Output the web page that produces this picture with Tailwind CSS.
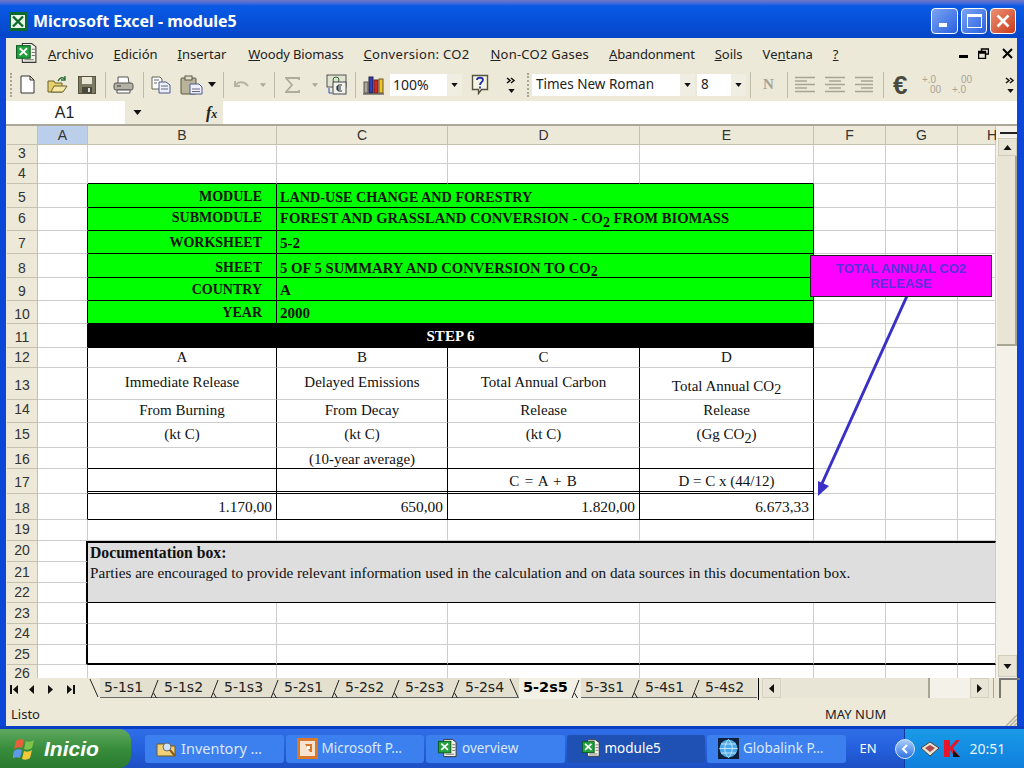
<!DOCTYPE html>
<html lang="en">
<head>
    <meta charset="UTF-8">
    <meta name="viewport" content="width=device-width, initial-scale=1.0">
    <title>Microsoft Excel - module5</title>
    <script src="https://cdn.jsdelivr.net/npm/@tailwindcss/browser@4"></script>
</head>
<body class="w-[1024px] h-[768px] overflow-hidden flex flex-col bg-[#0b46d6] font-['Noto_Sans',sans-serif]">
    <svg class="hidden">
        <symbol id="xls" viewBox="0 0 22 22">
            <path d="M7 1.5h9l4 3v15H7z" fill="#f5f4e8" stroke="#333"/>
            <path d="M16 7h3M16 10h3M16 13h3M9 17h9" stroke="#777"/>
            <rect x="1.5" y="3.5" width="13" height="12" fill="#22a33f" stroke="#0c5a20"/>
            <path d="M4.5 6l7 6.5M11.5 6l-7 6.5" stroke="#fff" stroke-width="1.8"/>
        </symbol>
        <symbol id="tabsep" viewBox="0 0 10 22">
            <path d="M1 20L8 2" stroke="#222" fill="none"/>
            <path d="M3.500 15l3 5" stroke="#222" fill="none"/>
        </symbol>
        <symbol id="drop" viewBox="0 0 8 5">
            <path d="M0 0h8L4 5z" fill="#111"/>
        </symbol>
    </svg>

    <!-- title bar -->
    <div class="h-[38px] shrink-0 flex items-center pt-[4px] pl-[9px] pr-[8px] bg-gradient-to-b from-[#6f78c4] via-[#0a5ae6] via-15% to-[#0445c8]">
        <svg class="w-[18px] h-[19px]" viewBox="0 0 18 19">
            <rect width="18" height="19" fill="#0c6b2c"/>
            <rect x="2" y="3" width="14" height="13" fill="#e8f4e8"/>
            <path d="M4 4.5l10 10M14 4.5l-10 10" stroke="#0c6b2c" stroke-width="2.4"/>
        </svg>
        <span class="ml-[6px] text-[16px] font-bold text-white">Microsoft Excel - module5</span>
        <div class="ml-auto flex gap-[3px]">
            <div class="w-[27px] h-[26px] rounded-[4px] border border-white bg-gradient-to-br from-[#7ba3f2] to-[#2a5fe0] flex items-end pl-[7px] pb-[6px]">
                <div class="w-[8px] h-[4px] bg-white"></div>
            </div>
            <div class="w-[26px] h-[26px] rounded-[4px] border border-white bg-gradient-to-br from-[#7ba3f2] to-[#2a5fe0] flex items-center justify-center">
                <div class="w-[15px] h-[14px] border border-white border-t-[3px]"></div>
            </div>
            <div class="w-[26px] h-[26px] rounded-[4px] border border-white bg-gradient-to-br from-[#ec8f70] to-[#c8391a] flex items-center justify-center">
                <svg class="w-[14px] h-[14px]" viewBox="0 0 14 14"><path d="M1.5 1.5l11 11M12.5 1.5l-11 11" stroke="#fff" stroke-width="2.6"/></svg>
            </div>
        </div>
    </div>

    <!-- window body -->
    <div class="ml-[6px] mr-[7px] h-[688px] shrink-0 flex flex-col bg-[#ece9d8]">

        <!-- menu -->
        <div class="h-[30px] shrink-0 flex items-center text-[13px] text-[#222] relative">
            <svg class="ml-[9px] w-[23px] h-[23px]"><use href="#xls"/></svg>
            <div class="ml-[10px] pt-[3px] flex gap-[20px]">
                <span><u>A</u>rchivo</span>
                <span><u>E</u>dición</span>
                <span><u>I</u>nsertar</span>
                <span class="ml-[2px] tracking-[-0.15px]"><u>W</u>oody Biomass</span>
                <span class="tracking-[0.3px]"><u>C</u>onversion: CO2</span>
                <span class="ml-[1px] tracking-[0.25px]"><u>N</u>on-CO2 Gases</span>
                <span class="tracking-[-0.2px]"><u>A</u>bandonment</span>
                <span><u>S</u>oils</span>
                <span><span>Ve</span><u>n</u><span>tana</span></span>
                <span><u>?</u></span>
            </div>
            <div class="ml-auto mr-[4px] flex items-center gap-[10px]">
                <div class="w-[9px] h-[3px] bg-black mt-[6px]"></div>
                <svg class="w-[11px] h-[11px]" viewBox="0 0 11 11"><path d="M3.5 3.5V1h7v5H7.5M.5 3.5h7v7h-7zM.5 5h7" fill="none" stroke="#000" stroke-width="1.4"/></svg>
                <svg class="ml-[3px] w-[11px] h-[11px]" viewBox="0 0 11 11"><path d="M1 1l9 9M10 1l-9 9" stroke="#000" stroke-width="2"/></svg>
            </div>
        </div>

        <!-- toolbar -->
        <div class="h-[33px] shrink-0 flex items-center text-[14px] text-[#222]">
            <div class="ml-[4px] w-[3px] h-[24px] border-l-2 border-dotted border-[#a8a594]"></div>
            <svg class="ml-[7px] w-[15px] h-[19px]" viewBox="0 0 15 19"><path d="M1 1h9l4 4v13H1zM10 1v4h4" fill="#fff" stroke="#333"/></svg>
            <svg class="ml-[12px] w-[21px] h-[18px]" viewBox="0 0 21 18"><path d="M1 5h6l1 2h7v9H1z" fill="#e8cf6a" stroke="#6b6232"/><path d="M4 16l3-6h13l-4 6z" fill="#f5e9a4" stroke="#6b6232"/><path d="M11 5c2-4 5-4 7-2M18 0v4h-4" fill="none" stroke="#2f6e3a" stroke-width="1.4"/></svg>
            <svg class="ml-[10px] w-[18px] h-[18px]" viewBox="0 0 18 18"><rect x=".5" y=".5" width="17" height="17" fill="#7c7a62" stroke="#55533e"/><rect x="4" y="1" width="10" height="7" fill="#e9e7d6"/><rect x="4" y="11" width="10" height="6" fill="#4a4a3a"/><rect x="10" y="12" width="2" height="4" fill="#ddd"/></svg>
            <div class="ml-[9px] w-px h-[26px] bg-[#bfbcab]"></div>
            <svg class="ml-[7px] w-[21px] h-[18px]" viewBox="0 0 21 18"><path d="M5 7V1h10l1 6" fill="#fff" stroke="#555"/><rect x="1" y="7" width="19" height="7" rx="2" fill="#b4b2a4" stroke="#555"/><path d="M4 14h13v3H4z" fill="#fff" stroke="#555"/><path d="M4 10h4" stroke="#333"/></svg>
            <div class="ml-[9px] w-px h-[26px] bg-[#bfbcab]"></div>
            <svg class="ml-[7px] w-[20px] h-[18px]" viewBox="0 0 20 18"><path d="M1 1h8l2 2v10H1z" fill="#fff" stroke="#66654f"/><path d="M8 6h7l4 3v8H8z" fill="#eef0ff" stroke="#4c5a8a"/><path d="M10 10h7M10 13h7M3 4h5M3 7h3" stroke="#667"/></svg>
            <svg class="ml-[9px] w-[23px] h-[20px]" viewBox="0 0 23 20"><rect x="1" y="3" width="15" height="16" rx="1" fill="#b8b49a" stroke="#5a5844"/><rect x="5" y="1" width="7" height="4" fill="#e3e1d0" stroke="#5a5844"/><path d="M10 9h9l3 3v7H10z" fill="#eef0ff" stroke="#4c5a8a"/><path d="M12 14h8M12 16.500h8" stroke="#667"/></svg>
            <svg class="ml-[5px] w-[8px] h-[5px]"><use href="#drop"/></svg>
            <div class="ml-[7px] w-px h-[26px] bg-[#bfbcab]"></div>
            <svg class="ml-[9px] w-[17px] h-[12px]" viewBox="0 0 17 12"><path d="M2 2v5h5M2 7c3-5 9-5 13 0" fill="none" stroke="#b6b3a2" stroke-width="2"/></svg>
            <svg class="ml-[10px] w-[6px] h-[4px] opacity-30"><use href="#drop"/></svg>
            <div class="ml-[8px] w-px h-[26px] bg-[#bfbcab]"></div>
            <svg class="ml-[10px] w-[15px] h-[16px]" viewBox="0 0 15 16"><path d="M14 3V1H1l6 7-6 7h13v-2" fill="none" stroke="#aeab9a" stroke-width="1.8"/></svg>
            <svg class="ml-[12px] w-[6px] h-[4px] opacity-30"><use href="#drop"/></svg>
            <svg class="ml-[8px] w-[21px] h-[21px]" viewBox="0 0 21 21"><rect x="1" y="1" width="19" height="12" fill="#dfe3d0" stroke="#555"/><circle cx="10" cy="6" r="3" fill="none" stroke="#2a6a3a"/><rect x="7" y="8" width="13" height="12" fill="#f3f2e6" stroke="#445"/><path d="M16 11h-3c-2 0-2 6 0 6h3M10 13h5M10 15h5" fill="none" stroke="#234" stroke-width="1.2"/><path d="M3 14v5h3" fill="none" stroke="#2a50b0"/></svg>
            <div class="ml-[8px] w-px h-[26px] bg-[#bfbcab]"></div>
            <svg class="ml-[7px] w-[21px] h-[20px]" viewBox="0 0 21 20"><rect x="1" y="7" width="4" height="11" fill="#a8a59a" stroke="#555"/><rect x="6" y="2" width="4" height="16" fill="#2f3fc0" stroke="#223"/><rect x="11" y="5" width="4" height="13" fill="#d8251f" stroke="#622"/><rect x="16" y="4" width="4" height="14" fill="#f0c520" stroke="#653"/><path d="M0 19h21" stroke="#333"/></svg>
            <div class="ml-[6px] w-[72px] h-[22px] bg-white flex items-center pl-[3px]">
                <span>100%</span>
                <div class="ml-auto w-[15px] h-full bg-[#f0eee2] flex items-center justify-center"><svg class="w-[7px] h-[4px]"><use href="#drop"/></svg></div>
            </div>
            <svg class="ml-[9px] w-[18px] h-[21px]" viewBox="0 0 18 21"><path d="M1.500 1.500h15v14h-6l-3 4v-4h-6z" fill="#f6f4e4" stroke="#55533e" stroke-width="1.400"/><path d="M6 6c0-3 6-3 6 0 0 2-3 2-3 5M9 12.500v2" fill="none" stroke="#2233aa" stroke-width="1.800"/></svg>
            <div class="ml-[17px] w-[10px] flex flex-col items-center gap-[5px]">
                <svg class="w-[10px] h-[7px]" viewBox="0 0 10 7"><path d="M1 1l3 2.500-3 2.500M5 1l3 2.500-3 2.500" fill="none" stroke="#111" stroke-width="1.500"/></svg>
                <svg class="w-[7px] h-[4px]"><use href="#drop"/></svg>
            </div>
            <div class="ml-[11px] w-[3px] h-[24px] border-l-2 border-dotted border-[#a8a594]"></div>
            <div class="ml-[2px] w-[163px] h-[22px] bg-white flex items-center pl-[4px] text-[13.5px]">
                <span>Times New Roman</span>
                <div class="ml-auto w-[15px] h-full bg-[#f0eee2] flex items-center justify-center"><svg class="w-[7px] h-[4px]"><use href="#drop"/></svg></div>
            </div>
            <div class="ml-[2px] w-[49px] h-[22px] bg-white flex items-center pl-[4px] text-[13.5px]">
                <span>8</span>
                <div class="ml-auto w-[15px] h-full bg-[#f0eee2] flex items-center justify-center"><svg class="w-[7px] h-[4px]"><use href="#drop"/></svg></div>
            </div>
            <div class="ml-[4px] w-px h-[26px] bg-[#bfbcab]"></div>
            <span class="ml-[12px] w-[12px] text-[15px] font-bold leading-none text-[#a5a294] font-['Liberation_Serif',serif]">N</span>
            <div class="ml-[12px] w-px h-[26px] bg-[#bfbcab]"></div>
            <svg class="ml-[7px] w-[20px] h-[17px]" viewBox="0 0 20 17"><path d="M0 1.500h20M0 5h12M0 8.500h20M0 12h12M0 15.500h20" stroke="#a8a594" stroke-width="1.500"/></svg>
            <svg class="ml-[10px] w-[20px] h-[17px]" viewBox="0 0 20 17"><path d="M0 1.500h20M4 5h12M0 8.500h20M4 12h12M0 15.500h20" stroke="#a8a594" stroke-width="1.500"/></svg>
            <svg class="ml-[10px] w-[18px] h-[17px]" viewBox="0 0 18 17"><path d="M0 1.500h18M6 5h12M0 8.500h18M6 12h12M0 15.500h18" stroke="#a8a594" stroke-width="1.500"/></svg>
            <div class="ml-[10px] w-px h-[26px] bg-[#bfbcab]"></div>
            <span class="ml-[9px] w-[19px] text-[26px] font-bold leading-none text-[#4a4a40] font-['Liberation_Sans',sans-serif]">€</span>
            <div class="ml-[10px] w-[22px] flex flex-col text-[10px] leading-[10px] text-[#a8a594] font-['Liberation_Sans',sans-serif]">
                <span>+.0</span>
                <span class="pl-[8px]">00</span>
            </div>
            <div class="ml-[8px] w-[24px] flex flex-col text-[10px] leading-[10px] text-[#a8a594] font-['Liberation_Sans',sans-serif]">
                <span class="pl-[9px]">00</span>
                <span>+.0</span>
            </div>
            <div class="ml-[29px] w-[10px] flex flex-col items-center gap-[5px]">
                <svg class="w-[10px] h-[7px]" viewBox="0 0 10 7"><path d="M1 1l3 2.500-3 2.500M5 1l3 2.500-3 2.500" fill="none" stroke="#111" stroke-width="1.500"/></svg>
                <svg class="w-[7px] h-[4px]"><use href="#drop"/></svg>
            </div>
        </div>

        <!-- formula bar -->
        <div class="h-[23px] shrink-0 flex items-center font-['Liberation_Sans',sans-serif]">
            <div class="w-[119px] h-full bg-white flex items-center justify-center text-[16px] text-[#222] pr-[2px]">A1</div>
            <svg class="ml-[8px] w-[9px] h-[5px]"><use href="#drop"/></svg>
            <span class="ml-[64px] w-[13px] text-[16px] italic font-bold leading-none text-[#222] font-['Liberation_Serif',serif]">f<span class="text-[12px]">x</span></span>
            <div class="ml-[4px] flex-1 h-full bg-white"></div>
        </div>

        <!-- sheet -->
        <div class="h-[554px] shrink-0 relative flex border-t-2 border-[#aca899] bg-white overflow-hidden">
            <div class="w-[990px] shrink-0 pl-px overflow-hidden bg-[#ece9d8]">
                <table class="table-fixed w-[989px] border-separate border-spacing-0 bg-white text-[15px] leading-[16px] text-[#111] font-['Liberation_Serif',serif] [&_td]:border-r [&_td]:border-b [&_td]:border-r-[#cdcdcd] [&_td]:border-b-[#cdcdcd] [&_th]:bg-[#ece9d8] [&_th]:border-r [&_th]:border-b [&_th]:border-[#c4c1ae] [&_th]:font-normal [&_th]:text-center [&_th]:text-[14px] [&_th]:text-[#333] [&_th]:font-['Liberation_Sans',sans-serif]">
                    <colgroup>
                        <col class="w-[31px]"><col class="w-[50px]"><col class="w-[189px]"><col class="w-[171px]"><col class="w-[192px]"><col class="w-[174px]"><col class="w-[72px]"><col class="w-[72px]"><col class="w-[38px]">
                    </colgroup>
                    <tr class="h-[19px]">
                        <th></th><th class="bg-[#bccfea]!">A</th><th>B</th><th>C</th><th>D</th><th>E</th><th>F</th><th>G</th><th class="text-left! pl-[29px]">H</th>
                    </tr>
                    <tr class="h-[19px]"><th class="pb-[2px]">3</th><td></td><td></td><td></td><td></td><td></td><td></td><td></td><td></td></tr>
                    <tr class="h-[20px]"><th class="pb-[2px]">4</th><td></td><td class="border-b-black!"></td><td class="border-b-black!"></td><td class="border-b-black!"></td><td class="border-b-black!"></td><td></td><td></td><td></td></tr>
                    <tr class="h-[24px] font-bold [&>td]:pt-[2px]">
                        <th class="pt-[2px]">5</th><td class="border-r-black!"></td>
                        <td class="bg-[#00ff00] border-r-black! border-b-black! text-right pr-[14px] text-[14px]">MODULE</td>
                        <td colspan="3" class="bg-[#00ff00] border-r-black! border-b-black! pl-[3px] text-[14.200px]">LAND-USE CHANGE AND FORESTRY</td>
                        <td></td><td></td><td></td>
                    </tr>
                    <tr class="h-[23px] font-bold [&>td]:pb-[2px]">
                        <th class="pb-[2px]">6</th><td class="border-r-black!"></td>
                        <td class="bg-[#00ff00] border-r-black! border-b-black! text-right pr-[14px] text-[14px]">SUBMODULE</td>
                        <td colspan="3" class="bg-[#00ff00] border-r-black! border-b-black! pl-[3px] text-[14.600px]">FOREST AND GRASSLAND CONVERSION - CO<sub class="text-[14px]">2</sub> FROM BIOMASS</td>
                        <td></td><td></td><td></td>
                    </tr>
                    <tr class="h-[23px] font-bold [&>td]:pt-[2px]">
                        <th class="pt-[2px]">7</th><td class="border-r-black!"></td>
                        <td class="bg-[#00ff00] border-r-black! border-b-black! text-right pr-[14px] text-[14px]">WORKSHEET</td>
                        <td colspan="3" class="bg-[#00ff00] border-r-black! border-b-black! pl-[3px]">5-2</td>
                        <td></td><td></td><td></td>
                    </tr>
                    <tr class="h-[24px] font-bold [&>td]:pt-[4px]">
                        <th class="pt-[4px]">8</th><td class="border-r-black!"></td>
                        <td class="bg-[#00ff00] border-r-black! border-b-black! text-right pr-[14px] text-[14px]">SHEET</td>
                        <td colspan="3" class="bg-[#00ff00] border-r-black! border-b-black! pl-[3px] text-[14.700px]">5 OF 5 SUMMARY AND CONVERSION TO CO<sub class="text-[14px]">2</sub></td>
                        <td></td><td></td><td></td>
                    </tr>
                    <tr class="h-[23px] font-bold [&>td]:pt-[2px]">
                        <th class="pt-[4px]">9</th><td class="border-r-black!"></td>
                        <td class="bg-[#00ff00] border-r-black! border-b-black! text-right pr-[14px] text-[14px]">COUNTRY</td>
                        <td colspan="3" class="bg-[#00ff00] border-r-black! border-b-black! pl-[3px]">A</td>
                        <td></td><td></td><td></td>
                    </tr>
                    <tr class="h-[23px] font-bold [&>td]:pt-[2px]">
                        <th class="pt-[4px]">10</th><td class="border-r-black!"></td>
                        <td class="bg-[#00ff00] border-r-black! border-b-black! text-right pr-[14px] text-[14px]">YEAR</td>
                        <td colspan="3" class="bg-[#00ff00] border-r-black! border-b-black! pl-[3px]">2000</td>
                        <td></td><td></td><td></td>
                    </tr>
                    <tr class="h-[24px] font-bold">
                        <th class="pt-[2px]">11</th><td class="border-r-black!"></td>
                        <td colspan="4" class="bg-black border-r-black! border-b-black! text-white text-center">STEP 6</td>
                        <td></td><td></td><td></td>
                    </tr>
                    <tr class="h-[20px] text-center [&>td]:pb-[2px]">
                        <th class="pb-[2px]">12</th><td class="border-r-black!"></td>
                        <td class="border-r-black!">A</td><td class="border-r-black!">B</td><td class="border-r-black!">C</td><td class="border-r-black!">D</td>
                        <td></td><td></td><td></td>
                    </tr>
                    <tr class="h-[32px] text-center">
                        <th class="pt-[2px]">13</th><td class="border-r-black!"></td>
                        <td class="border-r-black! pb-[4px]">Immediate Release</td><td class="border-r-black! pb-[4px]">Delayed Emissions</td><td class="border-r-black! pb-[4px]">Total Annual Carbon</td><td class="border-r-black! pt-[4px]">Total Annual CO<sub class="text-[14px]">2</sub></td>
                        <td></td><td></td><td></td>
                    </tr>
                    <tr class="h-[23px] text-center [&>td]:pb-[2px]">
                        <th class="pb-[4px]">14</th><td class="border-r-black!"></td>
                        <td class="border-r-black!">From Burning</td><td class="border-r-black!">From Decay</td><td class="border-r-black!">Release</td><td class="border-r-black!">Release</td>
                        <td></td><td></td><td></td>
                    </tr>
                    <tr class="h-[25px] text-center [&>td]:pb-[2px]">
                        <th class="pb-[2px]">15</th><td class="border-r-black!"></td>
                        <td class="border-r-black!">(kt C)</td><td class="border-r-black!">(kt C)</td><td class="border-r-black!">(kt C)</td><td class="border-r-black!">(Gg CO<sub class="text-[14px]">2</sub>)</td>
                        <td></td><td></td><td></td>
                    </tr>
                    <tr class="h-[21px] text-center [&>td]:pt-[2px]">
                        <th class="pt-[2px]">16</th><td class="border-r-black!"></td>
                        <td class="border-r-black! border-b-black!"></td><td class="border-r-black! border-b-black!">(10-year average)</td><td class="border-r-black! border-b-black!"></td><td class="border-r-black! border-b-black!"></td>
                        <td></td><td></td><td></td>
                    </tr>
                    <tr class="h-[25px] text-center [&>td]:pt-[2px]">
                        <th class="pt-[2px]">17</th><td class="border-r-black!"></td>
                        <td class="border-r-black! border-b-3! border-double border-b-black!"></td><td class="border-r-black! border-b-3! border-double border-b-black!"></td><td class="border-r-black! border-b-3! border-double border-b-black! tracking-[0.8px]">C = A + B</td><td class="border-r-black! border-b-3! border-double border-b-black!">D = C x (44/12)</td>
                        <td></td><td></td><td></td>
                    </tr>
                    <tr class="h-[26px] text-right text-[15.400px]">
                        <th class="pt-[2px]">18</th><td class="border-r-black!"></td>
                        <td class="border-r-black! border-b-black! pr-[4px]">1.170,00</td><td class="border-r-black! border-b-black! pr-[4px]">650,00</td><td class="border-r-black! border-b-black! pr-[4px]">1.820,00</td><td class="border-r-black! border-b-black! pr-[4px]">6.673,33</td>
                        <td></td><td></td><td></td>
                    </tr>
                    <tr class="h-[21px]"><th class="pb-[2px]">19</th><td></td><td></td><td></td><td></td><td></td><td></td><td></td><td></td></tr>
                    <tr class="h-[21px]">
                        <th class="pb-[2px]">20</th><td class="border-r-2! border-r-black!"></td>
                        <td colspan="7" rowspan="3" class="align-top bg-[#dedede] border-t-2 border-t-black border-b-black! pl-[2px]">
                            <div class="h-[19px] font-bold text-[15.700px] flex items-center">Documentation box:</div>
                            <div class="h-[21px] text-[15.200px] flex items-center whitespace-nowrap">Parties are encouraged to provide relevant information used in the calculation and on data sources in this documentation box.</div>
                        </td>
                    </tr>
                    <tr class="h-[21px]"><th>21</th><td class="border-r-2! border-r-black!"></td></tr>
                    <tr class="h-[20px]"><th class="pb-[2px]">22</th><td class="border-r-2! border-r-black!"></td></tr>
                    <tr class="h-[21px]"><th>23</th><td class="border-r-2! border-r-black!"></td><td></td><td></td><td></td><td></td><td></td><td></td><td></td></tr>
                    <tr class="h-[21px]"><th class="pb-[2px]">24</th><td class="border-r-2! border-r-black!"></td><td></td><td></td><td></td><td></td><td></td><td></td><td></td></tr>
                    <tr class="h-[20px]"><th class="pb-[2px]">25</th><td class="border-r-2! border-r-black!"></td><td class="border-b-2! border-b-black!"></td><td class="border-b-2! border-b-black!"></td><td class="border-b-2! border-b-black!"></td><td class="border-b-2! border-b-black!"></td><td class="border-b-2! border-b-black!"></td><td class="border-b-2! border-b-black!"></td><td class="border-b-2! border-b-black!"></td></tr>
                    <tr class="h-[20px]"><th class="align-top">26</th><td></td><td></td><td></td><td></td><td></td><td></td><td></td><td></td></tr>
                </table>
            </div>

            <!-- vertical scrollbar -->
            <div class="flex-1 flex flex-col bg-[#f4f2e8]">
                <div class="h-[12px] border-b-2 border-[#222] ml-[4px] mb-[4px] shrink-0 -mt-[6px] pt-[12px]"></div>
                <div class="h-[18px] ml-[2px] shrink-0 bg-[#e8e5d6] border border-[#cfccba] flex items-center justify-center">
                    <svg class="w-[9px] h-[5px] rotate-180"><use href="#drop"/></svg>
                </div>
                <div class="h-[190px] ml-px shrink-0 bg-[#e8e5d6] border-b-2 border-r-2 border-[#a8a594]"></div>
                <div class="flex-1"></div>
                <div class="h-[22px] ml-[2px] mb-px shrink-0 bg-[#e8e5d6] border border-[#cfccba] flex items-center justify-center">
                    <svg class="w-[9px] h-[5px]"><use href="#drop"/></svg>
                </div>
            </div>

            <!-- callout and arrow drawn over the cells -->
            <svg class="absolute left-0 top-0 w-[1011px] h-[552px] pointer-events-none" viewBox="0 0 1011 552">
                <path d="M901 170L814 362" stroke="#3a30c8" stroke-width="3" fill="none"/>
                <path d="M812 370L812 355L823 360z" fill="#3a30c8"/>
            </svg>
            <div class="absolute left-[804px] top-[129px] w-[182px] h-[42px] bg-[#ff00ff] border border-[#222] text-center text-[13px] leading-[15px] pt-[5px] font-bold text-[#5a30dc] font-['Liberation_Sans',sans-serif]">TOTAL ANNUAL CO2<br>RELEASE</div>
        </div>

        <!-- sheet tabs -->
        <div class="h-[22px] shrink-0 flex items-start bg-[#ece9d8] text-[14px] text-[#222] font-['DejaVu_Sans',sans-serif]">
            <div class="w-[82px] h-full shrink-0 flex items-center pl-[4px] gap-[11px]">
                <svg class="w-[8px] h-[9px]" viewBox="0 0 8 9"><path d="M0 0h2v9H0zM8 0v9L3 4.500z" fill="#111"/></svg>
                <svg class="w-[5px] h-[9px]" viewBox="0 0 5 9"><path d="M5 0v9L0 4.500z" fill="#111"/></svg>
                <svg class="ml-[3px] w-[5px] h-[9px]" viewBox="0 0 5 9"><path d="M0 0v9l5-4.500z" fill="#111"/></svg>
                <svg class="ml-[3px] w-[8px] h-[9px]" viewBox="0 0 8 9"><path d="M6 0h2v9H6zM0 0v9l5-4.500z" fill="#111"/></svg>
            </div>
            <svg class="w-[12px] h-[20px] shrink-0" viewBox="0 0 12 20"><path d="M2 1l8 18" stroke="#222" fill="none"/></svg>
            <div class="relative w-[60px] h-[20px] shrink-0 pl-[4px] leading-[19px] bg-[#e3e0cf] border-b border-[#666]">5-1s1<svg class="absolute right-0 top-0 w-[10px] h-[22px]"><use href="#tabsep"/></svg></div>
            <div class="relative w-[60px] h-[20px] shrink-0 pl-[4px] leading-[19px] bg-[#e3e0cf] border-b border-[#666]">5-1s2<svg class="absolute right-0 top-0 w-[10px] h-[22px]"><use href="#tabsep"/></svg></div>
            <div class="relative w-[60px] h-[20px] shrink-0 pl-[4px] leading-[19px] bg-[#e3e0cf] border-b border-[#666]">5-1s3<svg class="absolute right-0 top-0 w-[10px] h-[22px]"><use href="#tabsep"/></svg></div>
            <div class="relative w-[61px] h-[20px] shrink-0 pl-[4px] leading-[19px] bg-[#e3e0cf] border-b border-[#666]">5-2s1<svg class="absolute right-0 top-0 w-[10px] h-[22px]"><use href="#tabsep"/></svg></div>
            <div class="relative w-[60px] h-[20px] shrink-0 pl-[4px] leading-[19px] bg-[#e3e0cf] border-b border-[#666]">5-2s2<svg class="absolute right-0 top-0 w-[10px] h-[22px]"><use href="#tabsep"/></svg></div>
            <div class="relative w-[60px] h-[20px] shrink-0 pl-[4px] leading-[19px] bg-[#e3e0cf] border-b border-[#666]">5-2s3<svg class="absolute right-0 top-0 w-[10px] h-[22px]"><use href="#tabsep"/></svg></div>
            <div class="relative w-[58px] h-[20px] shrink-0 pl-[4px] leading-[19px] bg-[#e3e0cf] border-b border-[#666]">5-2s4<svg class="absolute right-0 top-0 w-[10px] h-[20px]" viewBox="0 0 10 20"><path d="M1 1l8 18" stroke="#222" fill="none"/></svg></div>
            <div class="relative w-[62px] h-[21px] shrink-0 pl-[4px] leading-[19px] bg-[#f3f1e6] font-bold text-[14.500px] text-black">5-2s5<svg class="absolute right-0 top-0 w-[10px] h-[22px]"><use href="#tabsep"/></svg></div>
            <div class="relative w-[60px] h-[20px] shrink-0 pl-[4px] leading-[19px] bg-[#e3e0cf] border-b border-[#666]">5-3s1<svg class="absolute right-0 top-0 w-[10px] h-[22px]"><use href="#tabsep"/></svg></div>
            <div class="relative w-[60px] h-[20px] shrink-0 pl-[4px] leading-[19px] bg-[#e3e0cf] border-b border-[#666]">5-4s1<svg class="absolute right-0 top-0 w-[10px] h-[22px]"><use href="#tabsep"/></svg></div>
            <div class="relative w-[56px] h-[20px] shrink-0 pl-[4px] leading-[19px] bg-[#e3e0cf] border-b border-[#666]">5-4s2</div>
            <div class="w-px h-full ml-px bg-black shrink-0"></div>
            <!-- horizontal scrollbar -->
            <div class="ml-[3px] w-[19px] h-[20px] bg-[#e8e5d6] border border-[#d4d1c0] flex items-center justify-center shrink-0"><svg class="w-[5px] h-[9px]" viewBox="0 0 5 9"><path d="M5 0v9L0 4.500z" fill="#111"/></svg></div>
            <div class="ml-px w-[148px] h-[20px] bg-[#e8e5d6] border-r-2 border-[#a8a594] shrink-0"></div>
            <div class="w-[40px] h-[20px] bg-[#f4f2e8] shrink-0"></div>
            <div class="w-[19px] h-[20px] bg-[#e8e5d6] border border-[#d4d1c0] flex items-center justify-center shrink-0"><svg class="w-[5px] h-[9px]" viewBox="0 0 5 9"><path d="M0 0v9l5-4.500z" fill="#111"/></svg></div>
            <div class="ml-[4px] w-px h-[20px] bg-[#a8a594] shrink-0"></div>
            <div class="ml-[5px] w-[21px] h-[20px] border-l-2 border-t-2 border-[#777] shrink-0"></div>
        </div>

        <!-- status bar -->
        <div class="h-[26px] shrink-0 relative flex items-center pt-[3px] text-[13px] text-[#222]">
            <span class="ml-[5px]">Listo</span>
            <span class="ml-[785px]">MAY NUM</span>
            <svg class="absolute right-0 bottom-0 w-[13px] h-[13px]" viewBox="0 0 13 13"><path d="M13 2L2 13M13 6L6 13M13 10L10 13" stroke="#b5b29f" stroke-width="1.500"/></svg>
        </div>
    </div>

    <div class="h-[3px] shrink-0 bg-[#0a3fc4]"></div>

    <!-- taskbar -->
    <div class="h-[39px] shrink-0 flex items-center bg-gradient-to-b from-[#2f6ee8] via-[#2560dc] to-[#1d4fc4] text-[13.500px] text-[#dbe7fc]">
        <div class="w-[131px] h-full shrink-0 flex items-center pl-[13px] rounded-r-[12px] bg-gradient-to-b from-[#5fa85f] via-[#388e3c] to-[#2a7a30]">
            <svg class="w-[24px] h-[24px]" viewBox="0 0 24 24">
                <path d="M3 4c3-2 5-2 8-1l-2 8c-3-1-5-1-8 1z" fill="#e8603a"/>
                <path d="M13 4c3 1 5 1 8-1l-2 8c-3 2-5 2-8 1z" fill="#7fc34a"/>
                <path d="M1 14c3-2 5-2 8-1l-2 8c-3-1-5-1-8 1z" fill="#5b9be8"/>
                <path d="M11 14c3 1 5 1 8-1l-2 8c-3 2-5 2-8 1z" fill="#f5c93a"/>
            </svg>
            <span class="ml-[7px] text-[21px] font-bold italic text-white font-['Liberation_Sans',sans-serif]">Inicio</span>
        </div>
        <div class="ml-[14px] flex gap-[2px]">
            <div class="w-[138.500px] h-[28px] rounded-[3px] bg-[#3c7fee] flex items-center pl-[11px]">
                <svg class="w-[21px] h-[20px]" viewBox="0 0 21 20"><path d="M1 5h7l2 2h9v10H1z" fill="#f0d078" stroke="#6b5a20"/><circle cx="11" cy="8" r="4" fill="#cfe3f8" stroke="#6a6a6a"/><path d="M14 11l5 6" stroke="#8a5a20" stroke-width="2"/></svg>
                <span class="ml-[4px] text-[14.500px]">Inventory …</span>
            </div>
            <div class="w-[138.500px] h-[28px] rounded-[3px] bg-[#3c7fee] flex items-center pl-[11px]">
                <svg class="w-[21px] h-[21px]" viewBox="0 0 21 21"><rect width="21" height="21" fill="#d9772a"/><rect x="3" y="3" width="15" height="15" fill="#f6e4d0"/><path d="M8 6h7v8H8zM8 6v8h5" fill="#d9772a"/><rect x="10" y="8" width="3" height="3" fill="#fff"/></svg>
                <span class="ml-[4px]">Microsoft P…</span>
            </div>
            <div class="w-[138.500px] h-[28px] rounded-[3px] bg-[#3c7fee] flex items-center pl-[11px]">
                <svg class="w-[21px] h-[21px]"><use href="#xls"/></svg>
                <span class="ml-[4px]">overview</span>
            </div>
            <div class="w-[138.500px] h-[28px] rounded-[3px] bg-[#1f50b4] flex items-center pl-[14px] text-white">
                <svg class="w-[20px] h-[21px]"><use href="#xls"/></svg>
                <span class="ml-[4px]">module5</span>
            </div>
            <div class="w-[138.500px] h-[28px] rounded-[3px] bg-[#3c7fee] flex items-center pl-[11px]">
                <svg class="w-[21px] h-[21px]" viewBox="0 0 21 21"><rect width="21" height="21" fill="#10203a"/><circle cx="10.500" cy="10.500" r="9" fill="#4aa8e8"/><path d="M1.500 10.500h18M10.500 1.500c-5 5-5 13 0 18M10.500 1.500c5 5 5 13 0 18M3 6h15M3 15h15" fill="none" stroke="#bfe2fa"/></svg>
                <span class="ml-[4px]">Globalink P…</span>
            </div>
        </div>
        <span class="ml-[14px] w-[18px] text-[13px] text-white">EN</span>
        <div class="ml-[26px] flex-1 h-full flex items-center bg-gradient-to-b from-[#1a9be8] to-[#0f7fdc] border-l border-[#0d3c9c]">
            <div class="-ml-[10px] w-[20px] h-[20px] rounded-full bg-gradient-to-b from-[#a8cdfa] to-[#2f6fe0] border border-[#dbe7fc] flex items-center justify-center">
                <svg class="w-[7px] h-[10px]" viewBox="0 0 7 10"><path d="M6 1L2 5l4 4" fill="none" stroke="#fff" stroke-width="2"/></svg>
            </div>
            <svg class="ml-[5px] w-[20px] h-[18px]" viewBox="0 0 20 18"><path d="M1 8l9-6 9 6-9 8z" fill="#e6e2d0" stroke="#444"/><path d="M5 8l5-3 5 3-5 4z" fill="#b04a4a"/></svg>
            <svg class="ml-[3px] w-[18px] h-[19px]" viewBox="0 0 18 19"><path d="M1 1h6v7l6-7h4l-7 8 7 9h-5L7 11v7H1z" fill="#e8142a"/><path d="M10 11l7 7h-7z" fill="#111"/></svg>
            <span class="ml-[9px] text-[14px] text-[#e8f2fd]">20:51</span>
        </div>
    </div>
</body>
</html>
